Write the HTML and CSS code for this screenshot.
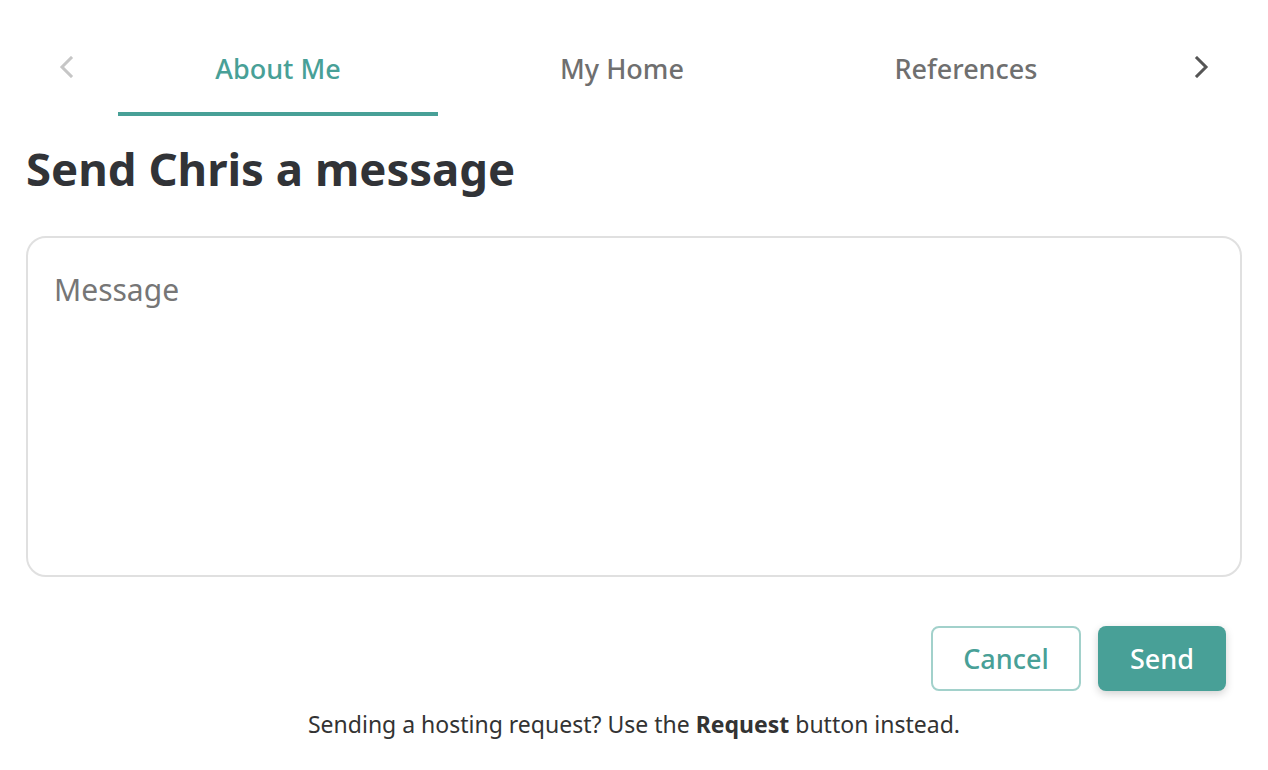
FILE: index.html
```html
<!DOCTYPE html>
<html lang="en">
<head>
    <meta charset="UTF-8" />
    <meta name="viewport" content="width=device-width, initial-scale=1.0" />
    <title>Send Chris a message</title>
    <link rel="stylesheet" href="styles.css">
</head>
<body>
<div class="tabs">
    <button class="tab-arrow disabled" aria-label="Previous">
        <svg width="16" height="22" viewBox="0 0 16 22"><path d="M13 2 L4 11 L13 20" /></svg>
    </button>
    <nav class="tab-list">
        <a href="#" class="tab active">About Me</a>
        <a href="#" class="tab">My Home</a>
        <a href="#" class="tab">References</a>
    </nav>
    <button class="tab-arrow" aria-label="Next">
        <svg width="16" height="22" viewBox="0 0 16 22"><path d="M3 2 L12 11 L3 20" /></svg>
    </button>
</div>

<main class="container">
    <h1>Send Chris a message</h1>

    <textarea class="message" placeholder="Message"></textarea>

    <div class="actions">
        <button class="btn btn-outline">Cancel</button>
        <button class="btn btn-primary">Send</button>
    </div>

    <p class="hint">Sending a hosting request? Use the <strong>Request</strong> button instead.</p>
</main>
</body>
</html>
```

FILE: styles.css
```css
:root {
    --primary: #48a097;
    --primary-light: #a2d1cb;
    --dark: #313337;
    --grey: #6f6f6f;
    --border: #e0e0e0;
}

* {
    box-sizing: border-box;
    margin: 0;
    padding: 0;
}

body {
    font-family: 'Noto Sans', 'Open Sans', sans-serif;
    background: white;
    color: var(--dark);
}

.tabs {
    display: flex;
    align-items: center;
    padding: 22px 42px 0;
}

.tab-arrow {
    width: 48px;
    height: 48px;
    border: none;
    background: none;
    display: flex;
    align-items: center;
    justify-content: center;
    margin-top: -4px;
    cursor: pointer;
}

.tab-arrow path {
    fill: none;
    stroke: #555;
    stroke-width: 3;
    stroke-linecap: square;
}

.tab-arrow.disabled path {
    stroke: #c6c6c6;
}

.tab-list {
    flex: 1;
    display: flex;
    gap: 24px;
    padding-left: 28px;
    overflow: hidden;
}

.tab {
    width: 320px;
    height: 94px;
    flex-shrink: 0;
    display: flex;
    align-items: center;
    justify-content: center;
    padding-top: 2px;
    border-bottom: 4px solid transparent;
    color: var(--grey);
    text-decoration: none;
    font-size: 27px;
    font-weight: 500;
}

.tab.active {
    color: var(--primary);
    border-bottom-color: var(--primary);
}

.container {
    padding: 0 26px;
}

h1 {
    font-size: 45.5px;
    font-weight: 700;
    line-height: 56px;
    margin-top: 24px;
}

.message {
    display: block;
    width: 100%;
    height: 341px;
    margin-top: 40px;
    border: 2px solid var(--border);
    border-radius: 20px;
    padding: 31px 26px;
    font-family: inherit;
    font-size: 30px;
    line-height: 1.4;
    color: var(--dark);
    resize: none;
    outline: none;
}

.message::placeholder {
    color: #767676;
}

.actions {
    display: flex;
    justify-content: flex-end;
    gap: 17px;
    margin-top: 49px;
    padding-right: 16px;
}

.btn {
    height: 65px;
    border-radius: 8px;
    font-family: inherit;
    font-size: 27px;
    font-weight: 500;
    cursor: pointer;
}

.btn-outline {
    width: 150px;
    background: white;
    border: 2px solid var(--primary-light);
    color: var(--primary);
}

.btn-primary {
    width: 128px;
    background: var(--primary);
    border: none;
    color: white;
    box-shadow: 0 3px 8px rgba(0, 0, 0, 0.18);
}

.hint {
    text-align: center;
    font-size: 23px;
    line-height: 30px;
    margin-top: 18px;
    color: #333;
}

.hint strong {
    font-weight: 700;
}
```
